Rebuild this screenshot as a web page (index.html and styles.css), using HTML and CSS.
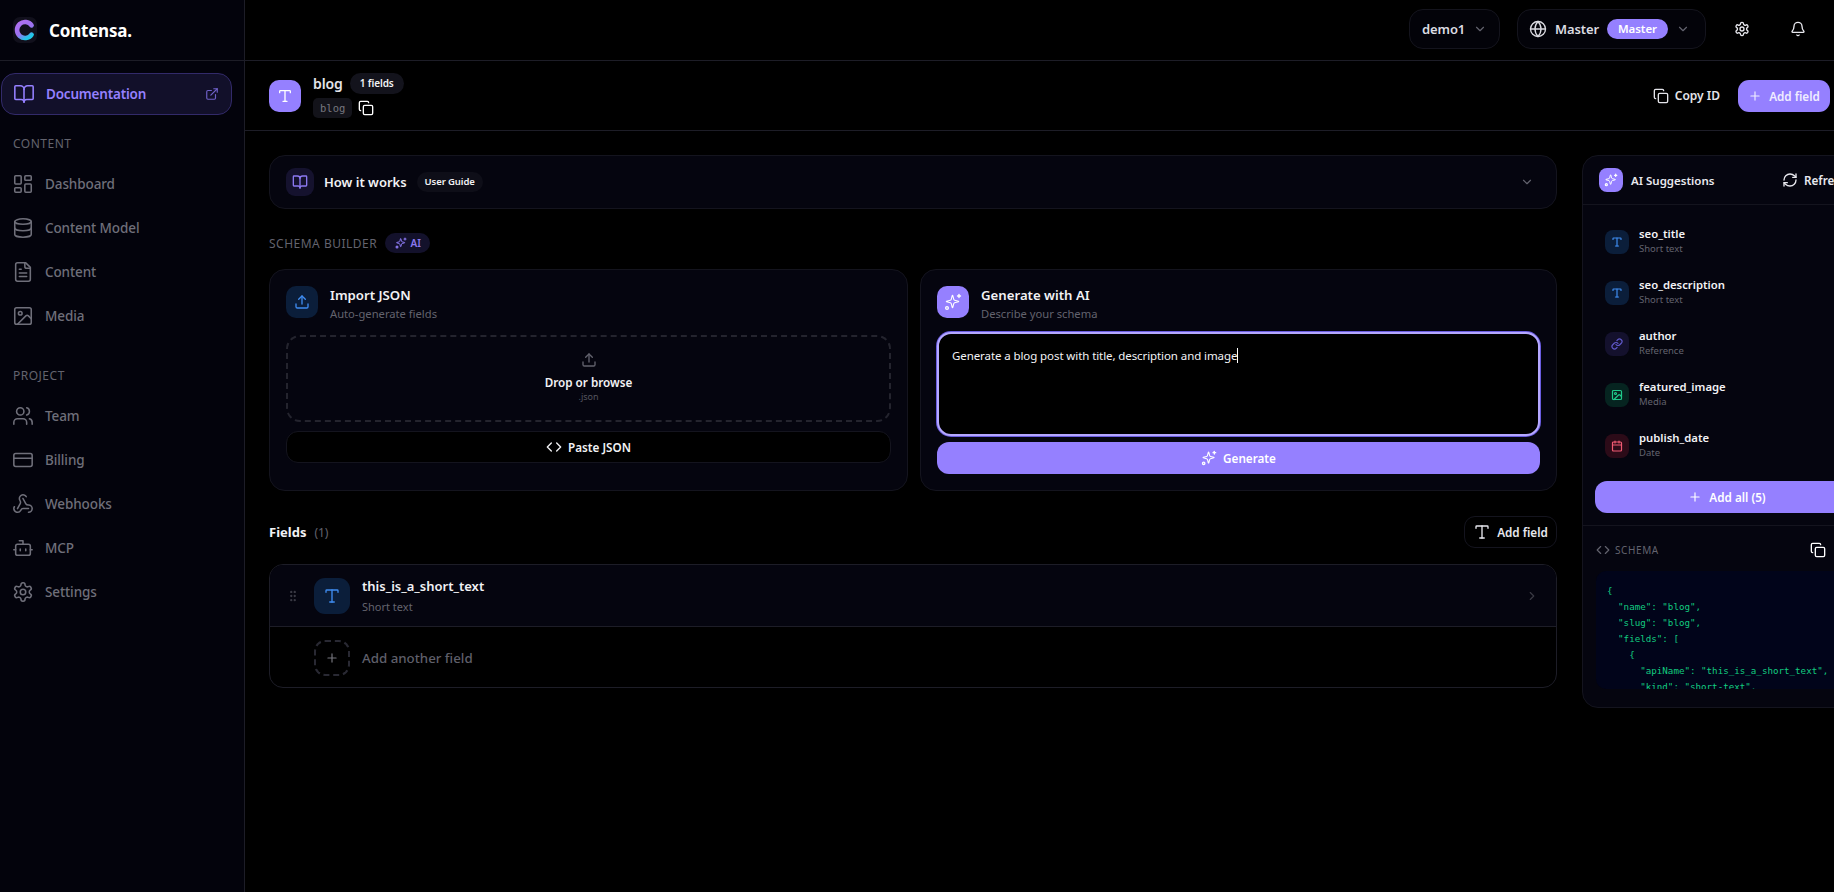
FILE: index.html
```html
<!DOCTYPE html>
<html lang="en">
<head>
<meta charset="utf-8">
<title>Contensa</title>
<link rel="stylesheet" href="styles.css">
</head>
<body>
<svg class="sprite" xmlns="http://www.w3.org/2000/svg">
  <symbol id="i-book" viewBox="0 0 24 24"><path d="M12 7v14"/><path d="M3 18a1 1 0 0 1-1-1V4a1 1 0 0 1 1-1h5a4 4 0 0 1 4 4 4 4 0 0 1 4-4h5a1 1 0 0 1 1 1v13a1 1 0 0 1-1 1h-6a3 3 0 0 0-3 3 3 3 0 0 0-3-3z"/></symbol>
  <symbol id="i-ext" viewBox="0 0 24 24"><path d="M15 3h6v6"/><path d="M10 14 21 3"/><path d="M18 13v6a2 2 0 0 1-2 2H5a2 2 0 0 1-2-2V8a2 2 0 0 1 2-2h6"/></symbol>
  <symbol id="i-dash" viewBox="0 0 24 24"><rect width="7" height="9" x="3" y="3" rx="1"/><rect width="7" height="5" x="14" y="3" rx="1"/><rect width="7" height="9" x="14" y="12" rx="1"/><rect width="7" height="5" x="3" y="16" rx="1"/></symbol>
  <symbol id="i-db" viewBox="0 0 24 24"><ellipse cx="12" cy="5" rx="9" ry="3"/><path d="M3 5V19A9 3 0 0 0 21 19V5"/><path d="M3 12A9 3 0 0 0 21 12"/></symbol>
  <symbol id="i-file" viewBox="0 0 24 24"><path d="M15 2H6a2 2 0 0 0-2 2v16a2 2 0 0 0 2 2h12a2 2 0 0 0 2-2V7Z"/><path d="M14 2v4a2 2 0 0 0 2 2h4"/><path d="M10 9H8"/><path d="M16 13H8"/><path d="M16 17H8"/></symbol>
  <symbol id="i-image" viewBox="0 0 24 24"><rect width="18" height="18" x="3" y="3" rx="2"/><circle cx="9" cy="9" r="2"/><path d="m21 15-3.086-3.086a2 2 0 0 0-2.828 0L6 21"/></symbol>
  <symbol id="i-users" viewBox="0 0 24 24"><path d="M16 21v-2a4 4 0 0 0-4-4H6a4 4 0 0 0-4 4v2"/><circle cx="9" cy="7" r="4"/><path d="M22 21v-2a4 4 0 0 0-3-3.87"/><path d="M16 3.13a4 4 0 0 1 0 7.75"/></symbol>
  <symbol id="i-card" viewBox="0 0 24 24"><rect width="20" height="14" x="2" y="5" rx="2"/><path d="M2 10h20"/></symbol>
  <symbol id="i-hook" viewBox="0 0 24 24"><path d="M18 16.98h-5.99c-1.1 0-1.95.94-2.48 1.9A4 4 0 0 1 2 17c.01-.7.2-1.4.57-2"/><path d="m6 17 3.13-5.78c.53-.97.1-2.18-.5-3.1a4 4 0 1 1 6.89-4.06"/><path d="m12 6 3.13 5.73C15.66 12.7 16.9 13 18 13a4 4 0 0 1 0 8"/></symbol>
  <symbol id="i-bot" viewBox="0 0 24 24"><path d="M12 8V4H8"/><rect width="16" height="12" x="4" y="8" rx="2"/><path d="M2 14h2"/><path d="M20 14h2"/><path d="M15 13v2"/><path d="M9 13v2"/></symbol>
  <symbol id="i-gear" viewBox="0 0 24 24"><path d="M12.22 2h-.44a2 2 0 0 0-2 2v.18a2 2 0 0 1-1 1.73l-.43.25a2 2 0 0 1-2 0l-.15-.08a2 2 0 0 0-2.73.73l-.22.38a2 2 0 0 0 .73 2.73l.15.1a2 2 0 0 1 1 1.72v.51a2 2 0 0 1-1 1.74l-.15.09a2 2 0 0 0-.73 2.73l.22.38a2 2 0 0 0 2.73.73l.15-.08a2 2 0 0 1 2 0l.43.25a2 2 0 0 1 1 1.73V20a2 2 0 0 0 2 2h.44a2 2 0 0 0 2-2v-.18a2 2 0 0 1 1-1.73l.43-.25a2 2 0 0 1 2 0l.15.08a2 2 0 0 0 2.73-.73l.22-.39a2 2 0 0 0-.73-2.73l-.15-.08a2 2 0 0 1-1-1.74v-.5a2 2 0 0 1 1-1.74l.15-.09a2 2 0 0 0 .73-2.73l-.22-.38a2 2 0 0 0-2.73-.73l-.15.08a2 2 0 0 1-2 0l-.43-.25a2 2 0 0 1-1-1.73V4a2 2 0 0 0-2-2z"/><circle cx="12" cy="12" r="3"/></symbol>
  <symbol id="i-globe" viewBox="0 0 24 24"><circle cx="12" cy="12" r="10"/><path d="M12 2a14.5 14.5 0 0 0 0 20 14.5 14.5 0 0 0 0-20"/><path d="M2 12h20"/></symbol>
  <symbol id="i-bell" viewBox="0 0 24 24"><path d="M10.268 21a2 2 0 0 0 3.464 0"/><path d="M3.262 15.326A1 1 0 0 0 4 17h16a1 1 0 0 0 .74-1.673C19.41 13.956 18 12.499 18 8A6 6 0 0 0 6 8c0 4.499-1.411 5.956-2.738 7.326"/></symbol>
  <symbol id="i-down" viewBox="0 0 24 24"><path d="m6 9 6 6 6-6"/></symbol>
  <symbol id="i-right" viewBox="0 0 24 24"><path d="m9 18 6-6-6-6"/></symbol>
  <symbol id="i-copy" viewBox="0 0 24 24"><rect width="14" height="14" x="8" y="8" rx="2"/><path d="M4 16c-1.1 0-2-.9-2-2V4c0-1.1.9-2 2-2h10c1.1 0 2 .9 2 2"/></symbol>
  <symbol id="i-plus" viewBox="0 0 24 24"><path d="M5 12h14"/><path d="M12 5v14"/></symbol>
  <symbol id="i-type" viewBox="0 0 24 24"><path d="M12 4v16"/><path d="M4 7V5a1 1 0 0 1 1-1h14a1 1 0 0 1 1 1v2"/><path d="M9 20h6"/></symbol>
  <symbol id="i-upload" viewBox="0 0 24 24"><path d="M12 3v12"/><path d="m17 8-5-5-5 5"/><path d="M21 15v4a2 2 0 0 1-2 2H5a2 2 0 0 1-2-2v-4"/></symbol>
  <symbol id="i-spark" viewBox="0 0 24 24"><path d="M9.937 15.5A2 2 0 0 0 8.5 14.063l-6.135-1.582a.5.5 0 0 1 0-.962L8.5 9.936A2 2 0 0 0 9.937 8.5l1.582-6.135a.5.5 0 0 1 .963 0L14.063 8.5A2 2 0 0 0 15.5 9.937l6.135 1.581a.5.5 0 0 1 0 .964L15.5 14.063a2 2 0 0 0-1.437 1.437l-1.582 6.135a.5.5 0 0 1-.963 0z" transform="translate(1.5 1.5) scale(.82)"/><path d="M20 2v4"/><path d="M22 4h-4"/><circle cx="4" cy="20" r="1.8"/></symbol>
  <symbol id="i-code" viewBox="0 0 24 24"><path d="m16 18 6-6-6-6"/><path d="m8 6-6 6 6 6"/></symbol>
  <symbol id="i-refresh" viewBox="0 0 24 24"><path d="M3 12a9 9 0 0 1 9-9 9.75 9.75 0 0 1 6.74 2.74L21 8"/><path d="M21 3v5h-5"/><path d="M21 12a9 9 0 0 1-9 9 9.75 9.75 0 0 1-6.74-2.74L3 16"/><path d="M8 16H3v5"/></symbol>
  <symbol id="i-link" viewBox="0 0 24 24"><path d="M10 13a5 5 0 0 0 7.54.54l3-3a5 5 0 0 0-7.07-7.07l-1.72 1.71"/><path d="M14 11a5 5 0 0 0-7.54-.54l-3 3a5 5 0 0 0 7.07 7.07l1.71-1.71"/></symbol>
  <symbol id="i-cal" viewBox="0 0 24 24"><path d="M8 2v4"/><path d="M16 2v4"/><rect width="18" height="18" x="3" y="4" rx="2"/><path d="M3 10h18"/></symbol>
  <symbol id="i-grip" viewBox="0 0 24 24"><circle cx="9" cy="5" r="2"/><circle cx="15" cy="5" r="2"/><circle cx="9" cy="12" r="2"/><circle cx="15" cy="12" r="2"/><circle cx="9" cy="19" r="2"/><circle cx="15" cy="19" r="2"/></symbol>
  <linearGradient id="logo-grad" x1="0.1" y1="0" x2="0.7" y2="1">
    <stop offset="0" stop-color="#b070f0"/><stop offset=".6" stop-color="#9a72f0"/><stop offset="1" stop-color="#20c8e8"/>
  </linearGradient>
</svg>

<aside class="sidebar">
  <div class="brand">
    <span class="logo"><svg viewBox="0 0 24 24" class="logo-mark"><path d="M18.6 7.4a8 8 0 1 0 0 9.2"/></svg></span>
    <span class="brand-name">Contensa.</span>
  </div>
  <a class="doc-link">
    <svg class="ic ic-nav"><use href="#i-book"/></svg>
    <span class="doc-text">Documentation</span>
    <svg class="ic ic-14 doc-ext"><use href="#i-ext"/></svg>
  </a>
  <div class="nav-title">CONTENT</div>
  <nav class="nav">
    <a class="nav-item"><svg class="ic ic-nav"><use href="#i-dash"/></svg>Dashboard</a>
    <a class="nav-item"><svg class="ic ic-nav"><use href="#i-db"/></svg>Content Model</a>
    <a class="nav-item"><svg class="ic ic-nav"><use href="#i-file"/></svg>Content</a>
    <a class="nav-item"><svg class="ic ic-nav"><use href="#i-image"/></svg>Media</a>
  </nav>
  <div class="nav-title nav-title-second">PROJECT</div>
  <nav class="nav">
    <a class="nav-item"><svg class="ic ic-nav"><use href="#i-users"/></svg>Team</a>
    <a class="nav-item"><svg class="ic ic-nav"><use href="#i-card"/></svg>Billing</a>
    <a class="nav-item"><svg class="ic ic-nav"><use href="#i-hook"/></svg>Webhooks</a>
    <a class="nav-item"><svg class="ic ic-nav"><use href="#i-bot"/></svg>MCP</a>
    <a class="nav-item"><svg class="ic ic-nav"><use href="#i-gear"/></svg>Settings</a>
  </nav>
</aside>

<div class="page">
  <header class="topbar">
    <button class="select select-org">demo1<svg class="ic ic-14 muted"><use href="#i-down"/></svg></button>
    <button class="select select-env">
      <svg class="ic ic-18"><use href="#i-globe"/></svg>
      <span>Master</span>
      <span class="env-pill">Master</span>
      <svg class="ic ic-14 muted"><use href="#i-down"/></svg>
    </button>
    <button class="icon-btn"><svg class="ic ic-16"><use href="#i-gear"/></svg></button>
    <button class="icon-btn"><svg class="ic ic-16"><use href="#i-bell"/></svg></button>
  </header>

  <section class="subbar">
    <span class="tile tile-32 tile-accent"><svg class="ic ic-16"><use href="#i-type"/></svg></span>
    <div class="model">
      <div class="model-top"><span class="model-name">blog</span><span class="pill">1 fields</span></div>
      <div class="model-bottom"><code class="slug">blog</code><svg class="ic ic-16 white"><use href="#i-copy"/></svg></div>
    </div>
    <div class="subbar-actions">
      <button class="ghost"><svg class="ic ic-16"><use href="#i-copy"/></svg>Copy ID</button>
      <button class="primary primary-top"><svg class="ic ic-14"><use href="#i-plus"/></svg>Add field</button>
    </div>
  </section>

  <div class="content">
    <main class="left">
      <div class="how card">
        <span class="tile tile-28 tile-purple"><svg class="ic ic-16"><use href="#i-book"/></svg></span>
        <span class="how-title">How it works</span>
        <span class="pill">User Guide</span>
        <svg class="ic ic-14 muted how-chevron"><use href="#i-down"/></svg>
      </div>

      <div class="section-row">
        <span class="section-label">SCHEMA BUILDER</span>
        <span class="ai-pill"><svg class="ic ic-12"><use href="#i-spark"/></svg>AI</span>
      </div>

      <div class="builder">
        <div class="card builder-card">
          <div class="builder-head">
            <span class="tile tile-32 tile-blue"><svg class="ic ic-16"><use href="#i-upload"/></svg></span>
            <div class="builder-text"><div class="builder-title">Import JSON</div><div class="builder-sub">Auto-generate fields</div></div>
          </div>
          <div class="dropzone">
            <svg class="ic ic-16 muted"><use href="#i-upload"/></svg>
            <div class="drop-title">Drop or browse</div>
            <div class="drop-sub">.json</div>
          </div>
          <button class="paste"><svg class="ic ic-16"><use href="#i-code"/></svg>Paste JSON</button>
        </div>

        <div class="card builder-card">
          <div class="builder-head">
            <span class="tile tile-32 tile-accent"><svg class="ic ic-18"><use href="#i-spark"/></svg></span>
            <div class="builder-text"><div class="builder-title">Generate with AI</div><div class="builder-sub">Describe your schema</div></div>
          </div>
          <div class="prompt">Generate a blog post with title, description and image<span class="caret"></span></div>
          <button class="primary generate"><svg class="ic ic-16"><use href="#i-spark"/></svg>Generate</button>
        </div>
      </div>

      <div class="fields-head">
        <span class="fields-title">Fields</span><span class="fields-count">(1)</span>
        <button class="add-small"><svg class="ic ic-18"><use href="#i-type"/></svg>Add field</button>
      </div>

      <div class="field-list">
        <div class="field-row">
          <svg class="grip"><use href="#i-grip"/></svg>
          <span class="tile tile-36 tile-blue"><svg class="ic ic-18"><use href="#i-type"/></svg></span>
          <div class="field-info"><div class="field-name">this_is_a_short_text</div><div class="field-kind">Short text</div></div>
          <svg class="ic ic-14 field-chevron"><use href="#i-right"/></svg>
        </div>
        <div class="field-add">
          <span class="tile-dashed"><svg class="ic ic-14"><use href="#i-plus"/></svg></span>
          <span class="field-add-text">Add another field</span>
        </div>
      </div>
    </main>

    <aside class="panel">
      <div class="panel-head">
        <span class="tile tile-24 tile-accent"><svg class="ic ic-14"><use href="#i-spark"/></svg></span>
        <span class="panel-title">AI Suggestions</span>
        <button class="refresh"><svg class="ic ic-14"><use href="#i-refresh"/></svg>Refresh</button>
      </div>
      <div class="suggestions">
        <div class="sug"><span class="tile tile-24 tile-blue"><svg class="ic ic-12"><use href="#i-type"/></svg></span><div class="sug-text"><div class="sug-name">seo_title</div><div class="sug-kind">Short text</div></div></div>
        <div class="sug"><span class="tile tile-24 tile-blue"><svg class="ic ic-12"><use href="#i-type"/></svg></span><div class="sug-text"><div class="sug-name">seo_description</div><div class="sug-kind">Short text</div></div></div>
        <div class="sug"><span class="tile tile-24 tile-indigo"><svg class="ic ic-12"><use href="#i-link"/></svg></span><div class="sug-text"><div class="sug-name">author</div><div class="sug-kind">Reference</div></div></div>
        <div class="sug"><span class="tile tile-24 tile-green"><svg class="ic ic-12"><use href="#i-image"/></svg></span><div class="sug-text"><div class="sug-name">featured_image</div><div class="sug-kind">Media</div></div></div>
        <div class="sug"><span class="tile tile-24 tile-red"><svg class="ic ic-12"><use href="#i-cal"/></svg></span><div class="sug-text"><div class="sug-name">publish_date</div><div class="sug-kind">Date</div></div></div>
        <button class="primary add-all"><svg class="ic ic-14"><use href="#i-plus"/></svg>Add all (5)</button>
      </div>
      <div class="schema">
        <div class="schema-head">
          <svg class="ic ic-14 muted"><use href="#i-code"/></svg>
          <span class="schema-label">SCHEMA</span>
          <svg class="ic ic-16 white schema-copy"><use href="#i-copy"/></svg>
        </div>
        <pre class="code">{
  "name": "blog",
  "slug": "blog",
  "fields": [
    {
      "apiName": "this_is_a_short_text",
      "kind": "short-text",
      "required": false
    }
  ]
}</pre>
      </div>
    </aside>
  </div>
</div>
</body>
</html>
```
FILE: styles.css
```css
* { box-sizing: border-box; }
html, body { height: 100%; }
body {
  margin: 0;
  display: flex;
  overflow: hidden;
  background: #000;
  color: #f2f2f5;
  font-family: "Noto Sans", "Open Sans", sans-serif;
  font-size: 14px;
}
button { font: inherit; color: inherit; background: none; border: 0; padding: 0; cursor: pointer; }
.sprite { position: absolute; width: 0; height: 0; }
.ic { fill: none; stroke: currentColor; stroke-width: 2; stroke-linecap: round; stroke-linejoin: round; flex: none; display: block; }
.ic-12 { width: 12px; height: 12px; stroke-width: 2.4; }
.ic-14 { width: 14px; height: 14px; }
.ic-16 { width: 16px; height: 16px; }
.ic-18 { width: 18px; height: 18px; stroke-width: 1.8; }
.ic-nav { width: 22px; height: 22px; stroke-width: 1.7; }
.muted { color: #63636e; }
.white { color: #fff; }

/* sidebar */
.sidebar { width: 245px; flex: none; height: 100%; background: #03030c; border-right: 1px solid #1d1d27; }
.brand { height: 61px; border-bottom: 1px solid #1d1d27; display: flex; align-items: center; gap: 12px; padding-left: 13px; }
.logo { width: 24px; height: 26px; border-radius: 7px; background: #11101c; display: flex; align-items: center; justify-content: center; }
.logo-mark { width: 24px; height: 24px; fill: none; stroke: url(#logo-grad); stroke-width: 4.6; stroke-linecap: round; }
.brand-name { font-size: 17px; font-weight: 700; color: #fff; letter-spacing: -.2px; }
.doc-link {
  margin: 12px 0 0 1px; width: 231px; height: 42px; display: flex; align-items: center;
  padding: 0 11px; gap: 11px; border: 1px solid #322a6a; border-radius: 14px;
  background: #12102a; color: #9580ff;
}
.doc-text { font-weight: 600; font-size: 13.5px; letter-spacing: -.2px; }
.doc-ext { margin-left: auto; margin-right: 1px; color: #6f60c8; }
.nav-title { margin: 20px 0 0 13px; font-size: 12px; line-height: 18px; letter-spacing: .5px; color: #63636e; }
.nav-title-second { margin-top: 29px; }
.nav { margin-top: 9px; display: flex; flex-direction: column; }
.nav-item { height: 44px; display: flex; align-items: center; gap: 11px; padding-left: 12px; color: #6f6f7a; font-size: 13.5px; letter-spacing: -.1px; font-weight: 500; }

/* top */
.page { flex: 1; min-width: 0; display: flex; flex-direction: column; }
.topbar { height: 61px; flex: none; display: flex; align-items: center; justify-content: flex-end; padding-right: 18px; border-bottom: 1px solid #1d1d27; }
.select { height: 40px; margin-top: -2px; border: 1px solid #14141d; border-radius: 14px; background: #030309; display: flex; align-items: center; justify-content: flex-start; font-weight: 600; font-size: 13px; letter-spacing: -.1px; color: #dcdce2; }
.select-org { width: 91px; padding-left: 12px; gap: 8px; margin-right: 17px; }
.select-env { width: 189px; padding-left: 11px; gap: 8px; margin-right: 18px; }
.env-pill { height: 20px; padding: 0 11px; border-radius: 10px; background: #9580ff; color: #fff; font-size: 11.5px; line-height: 20px; display: block; letter-spacing: -.1px; }
.icon-btn { width: 36px; height: 36px; margin-top: -2px; display: flex; align-items: center; justify-content: center; color: #e8e8ee; }
.icon-btn + .icon-btn { margin-left: 20px; }

.subbar { height: 70px; flex: none; display: flex; align-items: center; padding: 0 4px 0 24px; border-bottom: 1px solid #1d1d27; }
.tile { display: flex; align-items: center; justify-content: center; flex: none; }
.tile-32 { width: 32px; height: 32px; border-radius: 10px; }
.tile-28 { width: 28px; height: 28px; border-radius: 9px; }
.tile-36 { width: 36px; height: 36px; border-radius: 11px; }
.tile-24 { width: 24px; height: 24px; border-radius: 8px; }
.tile-accent { background: #9580ff; color: #fff; }
.tile-purple { background: #15122e; color: #8b78f0; }
.tile-blue { background: #0b1e3a; color: #3f8cf0; }
.tile-indigo { background: #14112d; color: #5f58c8; }
.tile-green { background: #062420; color: #1fc98a; }
.tile-red { background: #2c0b18; color: #f05a72; }
.model { margin-left: 12px; }
.model-top { display: flex; align-items: center; gap: 7px; height: 21px; }
.model-name { font-size: 14px; font-weight: 600; color: #e4e4ea; letter-spacing: -.1px; }
.pill { height: 21px; padding: 0 10px; border-radius: 11px; background: #13131c; font-size: 10px; font-weight: 600; line-height: 21px; color: #f2f2f5; letter-spacing: -.1px; }
.model-bottom { display: flex; align-items: center; gap: 6px; margin-top: 4px; }
.slug { height: 20px; padding: 0 7px; border-radius: 5px; background: #13131a; font-family: "DejaVu Sans Mono", monospace; font-size: 10.5px; line-height: 20px; color: #77777f; }
.subbar-actions { margin-left: auto; display: flex; align-items: center; gap: 18px; }
.ghost { display: flex; align-items: center; gap: 6px; font-size: 12px; font-weight: 600; color: #e4e4ea; }
.primary { background: #9580ff; color: #fff; display: flex; align-items: center; justify-content: center; font-weight: 600; font-size: 11.7px; }
.primary-top { width: 92px; height: 32px; border-radius: 11px; gap: 7px; color: #f0edff; }

/* content */
.content { flex: 1; display: flex; gap: 25px; padding: 24px 0 0 24px; min-height: 0; align-items: flex-start; }
.left { width: 1288px; flex: none; }
.card { background: #05050f; border: 1px solid #14141e; border-radius: 16px; }
.how { height: 54px; display: flex; align-items: center; padding: 0 22px 0 16px; }
.how-title { margin-left: 10px; font-size: 13px; font-weight: 600; color: #f2f2f5; }
.how .pill { margin-left: 10px; height: 20px; line-height: 20px; background: #0e0e18; font-size: 9.5px; padding: 0 8px; }
.how-chevron { margin-left: auto; }
.section-row { margin-top: 24px; height: 20px; display: flex; align-items: center; gap: 8px; }
.section-label { font-size: 12px; letter-spacing: .5px; color: #63636e; }
.ai-pill { height: 20px; width: 45px; justify-content: center; border-radius: 10px; background: #13112b; color: #8b78f0; font-size: 10px; font-weight: 600; display: flex; align-items: center; gap: 4px; }
.builder { margin-top: 16px; display: grid; grid-template-columns: 639px 637px; gap: 12px; }
.builder-card { height: 222px; padding: 16px; }
.builder-head { display: flex; gap: 12px; align-items: center; height: 32px; }
.builder-text { padding-top: 5px; }
.builder-title { font-size: 13.2px; font-weight: 600; line-height: 18px; color: #f2f2f5; }
.builder-sub { margin-top: 1px; font-size: 11.2px; line-height: 18px; color: #63636e; }
.dropzone { margin-top: 17px; height: 87px; border: 2px dashed #24242e; border-radius: 14px; display: flex; flex-direction: column; align-items: center; justify-content: center; }
.dropzone .ic { margin-top: -3px; }
.drop-title { margin-top: 5px; font-size: 11.7px; line-height: 18px; font-weight: 600; color: #f2f2f5; }
.drop-sub { font-size: 9px; line-height: 12px; color: #55555f; }
.paste { margin-top: 9px; width: 100%; height: 32px; border: 1px solid #14141e; border-radius: 12px; background: #000; display: flex; align-items: center; justify-content: center; gap: 6px; font-size: 11.7px; font-weight: 600; color: #f2f2f5; }
.prompt {
  margin-top: 14px; height: 104px; padding: 13px 13px; border: 2px solid #b5a8ff; box-shadow: 0 0 0 1px #6a5ce0;
  border-radius: 14px; background: #000; font-size: 11.5px; letter-spacing: -.09px; line-height: 18px; color: #f2f2f5;
}
.caret { display: inline-block; width: 1px; height: 15px; background: #fff; vertical-align: -3px; }
.generate { margin-top: 6px; width: 100%; height: 32px; border-radius: 12px; gap: 6px; }
.fields-head { margin-top: 25px; height: 32px; display: flex; align-items: center; }
.fields-title { font-size: 13px; font-weight: 700; color: #f2f2f5; }
.fields-count { margin-left: 8px; font-size: 12px; color: #63636e; }
.add-small { margin-left: auto; width: 93px; height: 32px; border: 1px solid #14141e; border-radius: 11px; display: flex; align-items: center; justify-content: center; gap: 6px; font-size: 11.7px; font-weight: 600; color: #e8e8ee; }
.field-list { margin-top: 16px; height: 124px; border: 1px solid #1d1d27; border-radius: 14px; overflow: hidden; }
.field-row { height: 62px; background: #05050f; border-bottom: 1px solid #1d1d27; display: flex; align-items: center; padding-left: 16px; }
.grip { width: 14px; height: 14px; fill: #3a3a44; flex: none; }
.field-row .tile { margin-left: 14px; }
.field-info { margin-left: 12px; }
.field-name { font-size: 13px; line-height: 18px; font-weight: 600; color: #f2f2f5; }
.field-kind { margin-top: 4px; font-size: 11px; line-height: 16px; color: #63636e; }
.field-chevron { margin-left: auto; margin-right: 17px; color: #3a3a44; }
.field-add { height: 61px; display: flex; align-items: center; padding-left: 44px; }
.tile-dashed { width: 36px; height: 36px; border: 2px dashed #292933; border-radius: 11px; display: flex; align-items: center; justify-content: center; color: #77777f; }
.field-add-text { margin-left: 12px; font-size: 13.3px; font-weight: 500; color: #5f5f6a; }

/* panel */
.panel { width: 290px; flex: none; height: 553px; background: #05050f; border: 1px solid #14141e; border-radius: 16px; }
.panel-head { height: 49px; border-bottom: 1px solid #14141e; display: flex; align-items: center; padding-left: 16px; white-space: nowrap; }
.panel-title { margin-left: 8px; width: 151px; font-size: 11.5px; font-weight: 600; color: #e8e8ee; }
.refresh { flex: none; display: flex; align-items: center; gap: 6px; font-size: 11.7px; font-weight: 600; color: #e8e8ee; }
.refresh .ic { width: 16px; height: 16px; }
.suggestions { padding: 11px 12px 12px; border-bottom: 1px solid #14141e; }
.sug { height: 51px; display: flex; align-items: center; gap: 10px; padding-left: 10px; }
.sug-text { padding-bottom: 2px; }
.sug-name { font-size: 11.3px; line-height: 16px; font-weight: 600; color: #f2f2f5; }
.sug-kind { font-size: 9.5px; line-height: 13px; color: #63636e; }
.add-all { margin-top: 10px; width: 264px; height: 32px; border-radius: 12px; gap: 7px; }
.schema { padding: 16px 12px 0 13px; }
.schema-head { width: 230px; height: 16px; display: flex; align-items: center; gap: 5px; }
.schema-label { font-size: 10px; letter-spacing: .6px; color: #63636e; }
.schema-copy { margin-left: auto; }
.code { margin: 13px 0 0; height: 118px; width: 300px; padding: 12px 0 0 11px; overflow: hidden; background: #01041a; border-radius: 10px; font-family: "DejaVu Sans Mono", monospace; font-size: 9.2px; line-height: 16px; color: #12cc80; }
```
